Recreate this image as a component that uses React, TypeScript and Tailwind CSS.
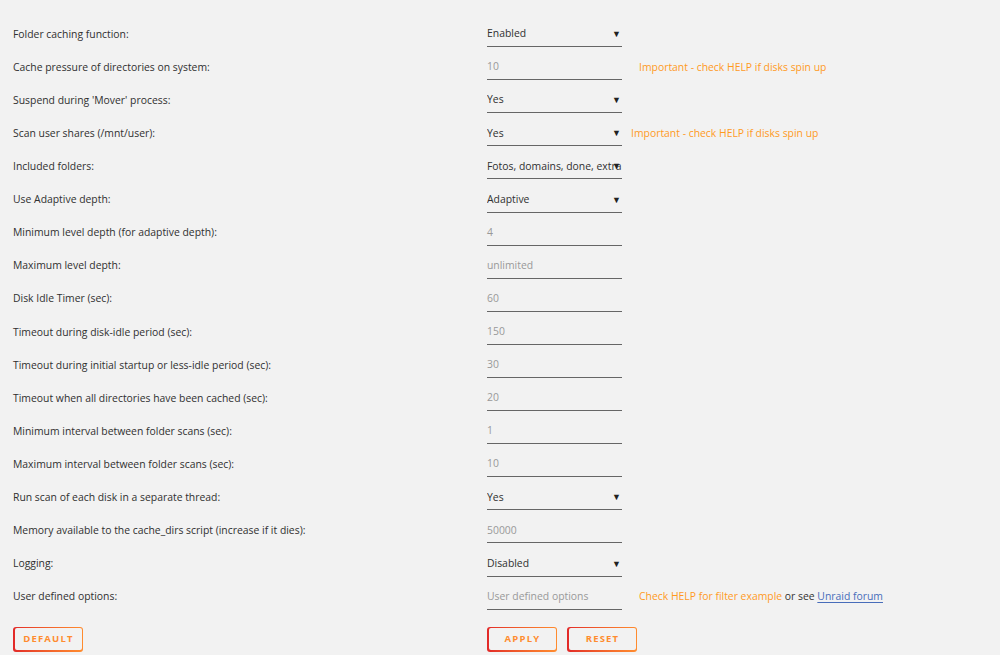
import type { ReactNode } from 'react';

type Row = {
  label: string;
  kind: 'select' | 'input';
  value: string;
  note?: ReactNode;
  noteGap?: 'near' | 'far';
};

const important = 'Important - check HELP if disks spin up';

const rows: Row[] = [
  { label: 'Folder caching function:', kind: 'select', value: 'Enabled' },
  { label: 'Cache pressure of directories on system:', kind: 'input', value: '10', note: important, noteGap: 'far' },
  { label: "Suspend during 'Mover' process:", kind: 'select', value: 'Yes' },
  { label: 'Scan user shares (/mnt/user):', kind: 'select', value: 'Yes', note: important, noteGap: 'near' },
  { label: 'Included folders:', kind: 'select', value: 'Fotos, domains, done, extra' },
  { label: 'Use Adaptive depth:', kind: 'select', value: 'Adaptive' },
  { label: 'Minimum level depth (for adaptive depth):', kind: 'input', value: '4' },
  { label: 'Maximum level depth:', kind: 'input', value: 'unlimited' },
  { label: 'Disk Idle Timer (sec):', kind: 'input', value: '60' },
  { label: 'Timeout during disk-idle period (sec):', kind: 'input', value: '150' },
  { label: 'Timeout during initial startup or less-idle period (sec):', kind: 'input', value: '30' },
  { label: 'Timeout when all directories have been cached (sec):', kind: 'input', value: '20' },
  { label: 'Minimum interval between folder scans (sec):', kind: 'input', value: '1' },
  { label: 'Maximum interval between folder scans (sec):', kind: 'input', value: '10' },
  { label: 'Run scan of each disk in a separate thread:', kind: 'select', value: 'Yes' },
  { label: 'Memory available to the cache_dirs script (increase if it dies):', kind: 'input', value: '50000' },
  { label: 'Logging:', kind: 'select', value: 'Disabled' },
  {
    label: 'User defined options:',
    kind: 'input',
    value: 'User defined options',
    noteGap: 'far',
    note: (
      <>
        Check HELP for filter example <span className="text-[#333]">or see </span>
        <span className="text-[#486dba] underline underline-offset-2">Unraid forum</span>
      </>
    ),
  },
];

function Field({ row }: { row: Row }) {
  return (
    <div className="relative flex h-[25px] w-[135px] shrink-0 items-center border-b border-[#666]">
      {row.kind === 'select' ? (
        <>
          <span className="w-[135px] overflow-hidden whitespace-nowrap text-[#303030]">{row.value}</span>
          <span className="absolute right-[1px] top-[7px] text-[9px] leading-none text-[#222]">▼</span>
        </>
      ) : (
        <span className="text-[#999]">{row.value}</span>
      )}
    </div>
  );
}

function GradientButton({ children }: { children: string }) {
  return (
    <button
      type="button"
      className="h-[25px] w-[70px] rounded-[3px] bg-gradient-to-r from-[#e22828] to-[#ff8c2f] p-[1.5px]"
    >
      <span className="flex h-full w-full items-center justify-center rounded-[2px] bg-[#f2f2f2] pl-[1px] text-[9.5px] font-bold tracking-[1.2px] text-[#ff8c2f]">
        {children}
      </span>
    </button>
  );
}

export default function App() {
  return (
    <div
      className="h-[655px] w-[1000px] bg-[#f2f2f2] pl-[13px] pt-[18px] text-[10.4px] text-[#303030]"
      style={{ fontFamily: '"Open Sans", "Noto Sans", sans-serif' }}
    >
      {rows.map((row) => (
        <div key={row.label} className="flex h-[33.1px] items-center">
          <div className="w-[474px] shrink-0">{row.label}</div>
          <Field row={row} />
          {row.note && (
            <span className={`${row.noteGap === 'near' ? 'ml-[9px]' : 'ml-[17px]'} whitespace-nowrap text-[#ff9a1f]`}>
              {row.note}
            </span>
          )}
        </div>
      ))}
      <div className="mt-[13px] flex">
        <div className="w-[474px]">
          <GradientButton>DEFAULT</GradientButton>
        </div>
        <div className="flex gap-[10px]">
          <GradientButton>APPLY</GradientButton>
          <GradientButton>RESET</GradientButton>
        </div>
      </div>
    </div>
  );
}
